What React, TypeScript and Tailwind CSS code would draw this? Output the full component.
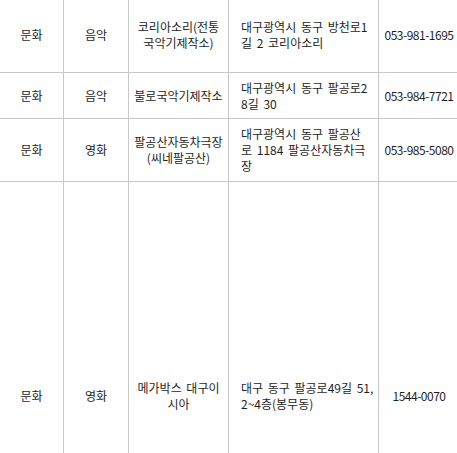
import React from "react";

type Row = { h: string; pad?: string; c1: string; c2: string; c3: string[]; c4: string[]; c5: string };

const rows: Row[] = [
  { h: "h-[73px]", pad: "pb-[3px]", c1: "문화", c2: "음악", c3: ["코리아소리(전통", "국악기제작소)"], c4: ["대구광역시 동구 방천로1", "길 2 코리아소리"], c5: "053-981-1695" },
  { h: "h-[46px]", c1: "문화", c2: "음악", c3: ["불로국악기제작소"], c4: ["대구광역시 동구 팔공로2", "8길 30"], c5: "053-984-7721" },
  { h: "h-[63px]", c1: "문화", c2: "영화", c3: ["팔공산자동차극장", "(씨네팔공산)"], c4: ["대구광역시 동구 팔공산", "로 1184 팔공산자동차극", "장"], c5: "053-985-5080" },
  { h: "h-[429px]", c1: "문화", c2: "영화", c3: ["메가박스 대구이", "시아"], c4: ["대구 동구 팔공로49길 51,", "2~4층(봉무동)"], c5: "1544-0070" },
];

export default function App() {
  return (
    <div
      className="w-[457px] h-[453px] overflow-hidden bg-white text-[#1e1e1e] text-[12px] leading-[16px]"
      style={{ fontFamily: '"Noto Sans CJK KR", "Noto Sans", sans-serif' }}
    >
      <div className="w-[460px]">
        {rows.map((r, i) => (
          <div key={i} className={`flex border-b border-[#c8c8c8] ${r.h}`}>
            <div className={`w-[64px] shrink-0 border-r border-[#c8c8c8] flex items-center justify-center text-center ${r.pad ?? ""}`}>
              {r.c1}
            </div>
            <div className={`w-[65px] shrink-0 border-r border-[#c8c8c8] flex items-center justify-center text-center ${r.pad ?? ""}`}>
              {r.c2}
            </div>
            <div className={`w-[100px] shrink-0 border-r border-[#c8c8c8] flex flex-col items-center justify-center text-center whitespace-nowrap [word-spacing:2px] ${r.pad ?? ""}`}>
              {r.c3.map((l, j) => (
                <span key={j}>{l}</span>
              ))}
            </div>
            <div className={`w-[150px] shrink-0 border-r border-[#c8c8c8] flex flex-col justify-center pl-[12px] whitespace-nowrap [word-spacing:2px] ${r.pad ?? ""}`}>
              {r.c4.map((l, j) => (
                <span key={j}>{l}</span>
              ))}
            </div>
            <div className={`w-[80px] shrink-0 flex items-center justify-center text-center tracking-[-0.5px] ${r.pad ?? ""}`}>
              {r.c5}
            </div>
          </div>
        ))}
      </div>
    </div>
  );
}
